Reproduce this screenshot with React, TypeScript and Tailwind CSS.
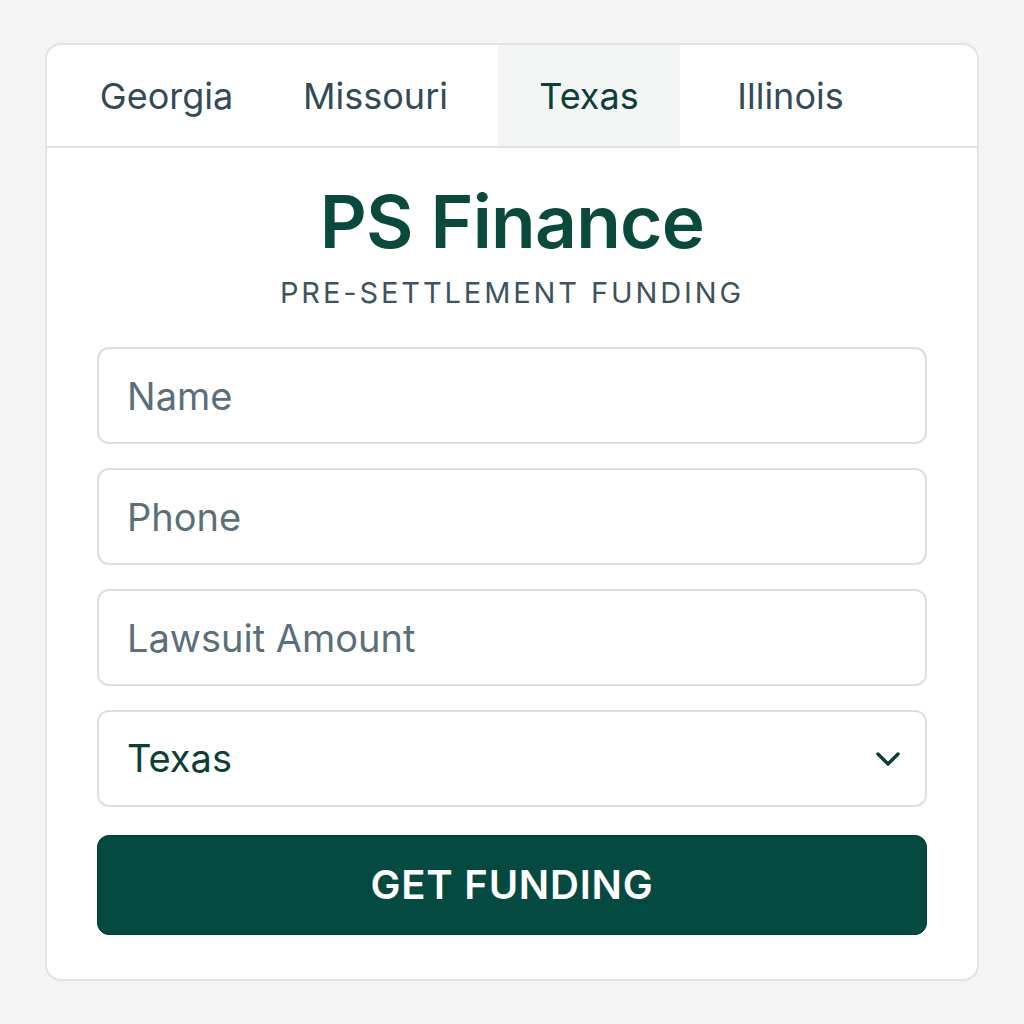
import React from "react";

const tabs = [
  { label: "Georgia", cls: "w-[239px]" },
  { label: "Missouri", cls: "w-[179px]" },
  { label: "Texas", cls: "w-[182px] ml-[33px]", active: true },
  { label: "Illinois", cls: "w-[221px]" },
];

const Field = ({ placeholder }: { placeholder: string }) => (
  <input
    placeholder={placeholder}
    className="h-[97px] w-full rounded-[12px] border-2 border-[#d9e0e4] bg-white px-[28px] text-[38px] text-[#0b3f37] outline-none placeholder:text-[#5b6f7b]"
  />
);

export default function App() {
  return (
    <div
      className="min-h-screen bg-[#f5f5f5] pt-[43px] pl-[45px]"
      style={{ fontFamily: "Inter, 'Noto Sans', sans-serif" }}
    >
      <div className="h-[938px] w-[934px] overflow-hidden rounded-[16px] border-2 border-[#dde3e6] bg-white">
        <div className="flex h-[103px] border-b-2 border-[#dde3e6]">
          {tabs.map((t) => (
            <button
              key={t.label}
              className={
                "flex h-full items-center justify-center text-[36px] " +
                t.cls +
                (t.active ? " bg-[#f4f5f5] text-[#0b3f37]" : " text-[#334a57]")
              }
            >
              {t.label}
            </button>
          ))}
        </div>

        <div className="flex flex-col items-center px-[50px] pt-[38px]">
          <h1 className="text-[73px] font-semibold leading-[72px] tracking-[-0.01em] text-[#0a4a3d]">
            PS Finance
          </h1>
          <p className="mt-[21px] text-[29px] leading-[28px] tracking-[0.1em] text-[#3d5360]">
            PRE-SETTLEMENT FUNDING
          </p>

          <div className="mt-[40px] flex w-full flex-col gap-[24px]">
            <Field placeholder="Name" />
            <Field placeholder="Phone" />
            <Field placeholder="Lawsuit Amount" />
            <div className="flex h-[97px] w-full items-center justify-between rounded-[12px] border-2 border-[#d9e0e4] bg-white pl-[28px] pr-[24px]">
              <span className="text-[38px] text-[#0b3f37]">Texas</span>
              <svg width="26" height="16" viewBox="0 0 26 16" fill="none">
                <path
                  d="M3 3l10 10 10-10"
                  stroke="#0b3f37"
                  strokeWidth="3.5"
                  strokeLinecap="round"
                  strokeLinejoin="round"
                />
              </svg>
            </div>
          </div>

          <button className="mt-[28px] h-[100px] w-full rounded-[12px] border border-[#033a31] bg-[#054a40] text-[40px] font-semibold tracking-[0.02em] text-white">
            GET FUNDING
          </button>
        </div>
      </div>
    </div>
  );
}
